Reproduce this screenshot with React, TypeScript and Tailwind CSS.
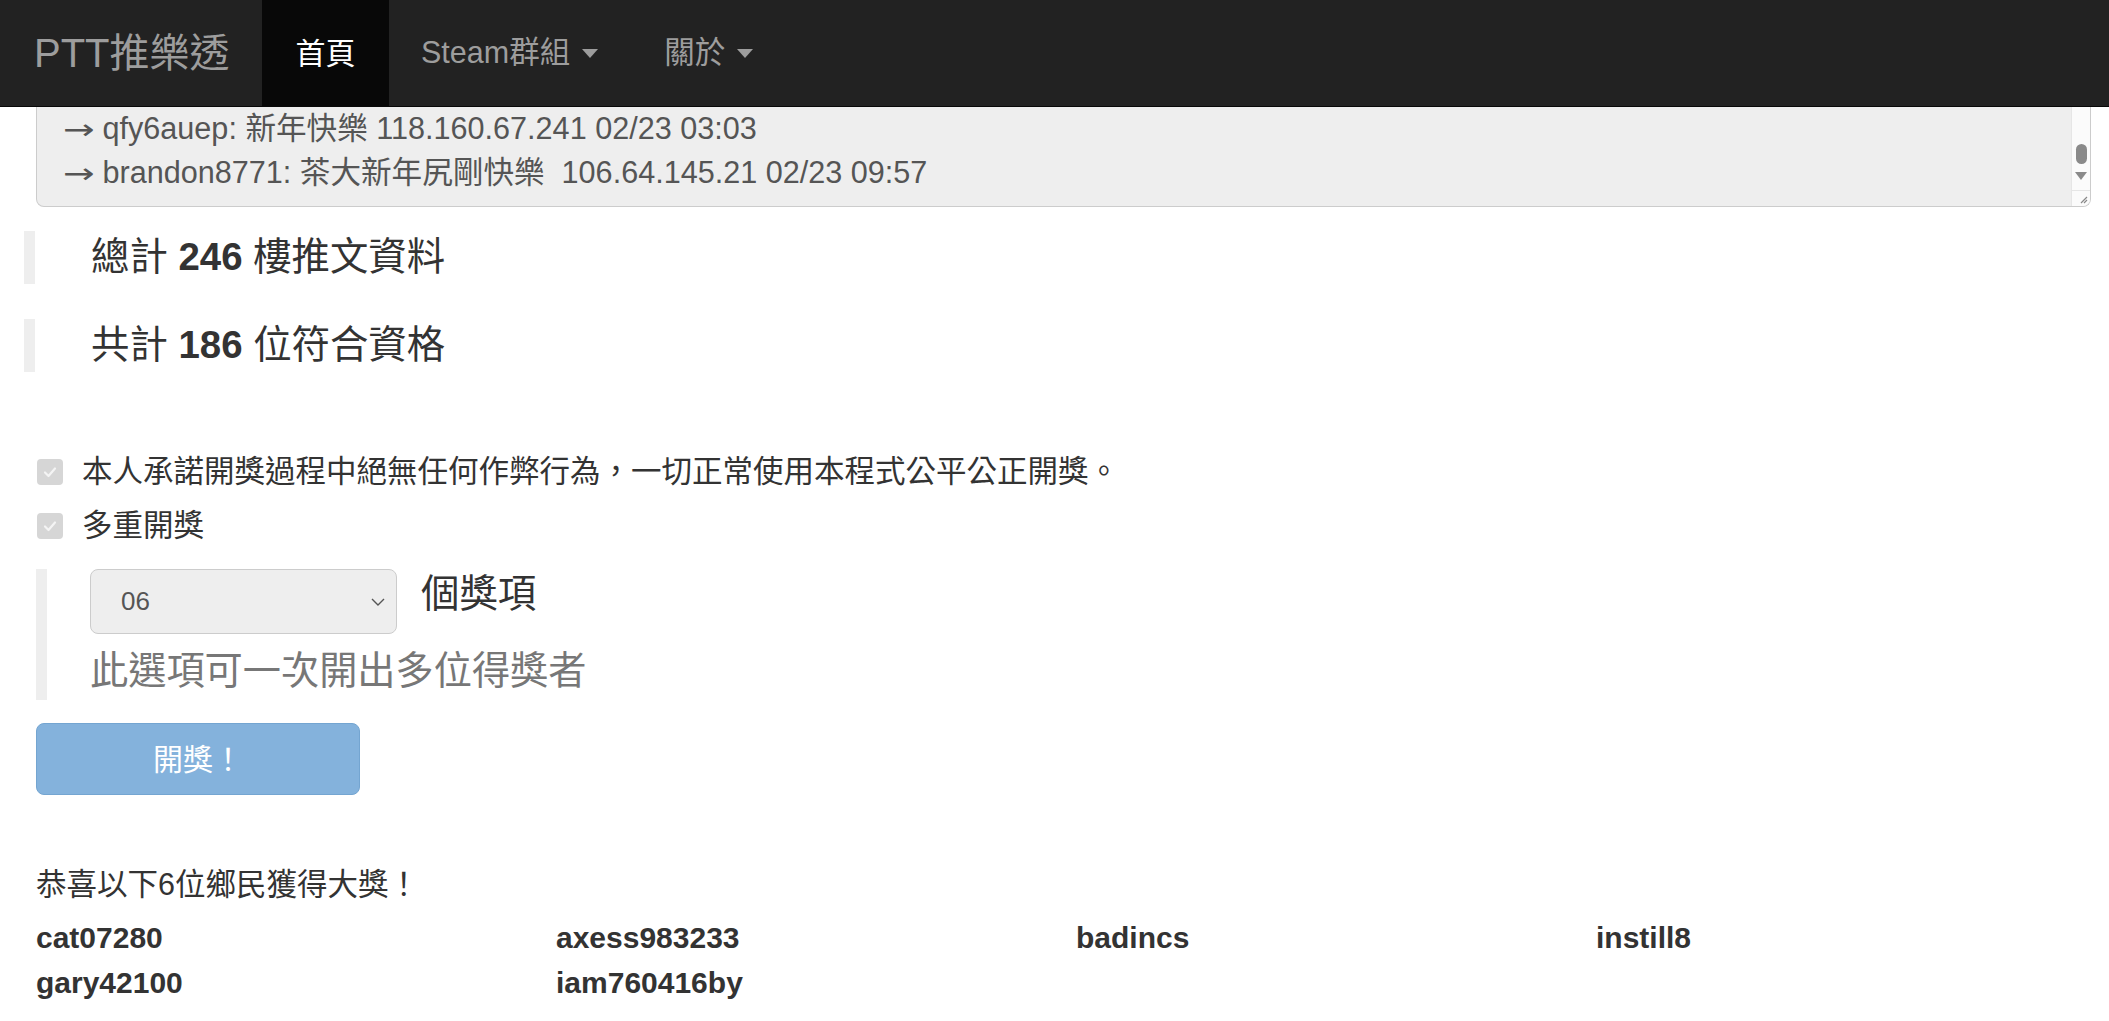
import React from 'react';

const winners = ['cat07280', 'axess983233', 'badincs', 'instill8', 'gary42100', 'iam760416by'];

const Caret: React.FC = () => (
  <span className="ml-[12px] inline-block h-0 w-0 border-x-[8px] border-t-[9px] border-x-transparent border-t-[#9d9d9d]" />
);

const CheckBox: React.FC = () => (
  <span className="flex h-[26px] w-[26px] shrink-0 items-center justify-center rounded-[4px] bg-[#d6d6d6]">
    <svg width="16" height="16" viewBox="0 0 16 16">
      <path d="M3 8.5 L6.5 12 L13 4.5" fill="none" stroke="#f4f4f4" strokeWidth="2.2" strokeLinecap="round" strokeLinejoin="round" />
    </svg>
  </span>
);

// push arrow, a bit wider than DejaVu's own glyph
const Arrow: React.FC = () => (
  <span className="inline-block w-[31px] font-['DejaVu_Sans',sans-serif] text-[28px]">
    <span className="inline-block origin-left scale-x-[1.35]">→</span>
  </span>
);

export default function App() {
  return (
    <div className="min-h-screen bg-white font-['Liberation_Sans','Noto_Sans_CJK_TC',sans-serif] text-[#333]">
      {/* Navbar */}
      <nav className="flex h-[107px] items-stretch border-b border-[#080808] bg-[#222] pl-[34px]">
        <div className="flex w-[228px] shrink-0 items-center text-[40px] text-[#9d9d9d]">PTT推樂透</div>
        <a className="flex w-[127px] items-center justify-center bg-[#080808] text-[30px] text-white">首頁</a>
        <a className="flex items-center px-[32px] text-[30.5px] text-[#9d9d9d]">
          Steam群組
          <Caret />
        </a>
        <a className="flex items-center px-[34px] text-[30.5px] text-[#9d9d9d]">
          關於
          <Caret />
        </a>
      </nav>

      <main className="pl-[36px] pr-[18px]">
        {/* Push list textarea (scrolled) */}
        <div className="flex h-[100px] overflow-hidden rounded-b-[8px] border-x border-b border-[#ccc] bg-[#eee]">
          <div className="flex-1 whitespace-pre pl-[26px] text-[30.6px] leading-[43px] text-[#555]">
            <div>
              <Arrow /> qfy6auep: 新年快樂 118.160.67.241 02/23 03:03
            </div>
            <div>
              <Arrow /> brandon8771: 茶大新年尻剛快樂  106.64.145.21 02/23 09:57
            </div>
          </div>
          <div className="flex w-[19px] flex-col items-center border-l border-[#e6e6e6] bg-[#fbfbfb]">
            <div className="mt-[37px] h-[20px] w-[11px] rounded-full bg-[#8a8a8a]" />
            <div className="mt-[8px] h-0 w-0 border-x-[6px] border-t-[8px] border-x-transparent border-t-[#8a8a8a]" />
            <div className="mt-auto mb-[2px] flex h-[14px] w-full items-end justify-end border-t border-[#e6e6e6] pr-[2px]">
              <svg width="10" height="10" viewBox="0 0 10 10">
                <path d="M9 3 L3 9 M9 6 L6 9" stroke="#888" strokeWidth="1.2" />
              </svg>
            </div>
          </div>
        </div>

        {/* Totals */}
        <div className="ml-[-12px] mt-[24px] flex h-[53px] items-center border-l-[11px] border-[#eee] pl-[56px] text-[38.4px] leading-none">
          總計&nbsp;<b>246</b>&nbsp;樓推文資料
        </div>
        <div className="ml-[-12px] mt-[35px] flex h-[53px] items-center border-l-[11px] border-[#eee] pl-[56px] text-[38.4px] leading-none">
          共計&nbsp;<b>186</b>&nbsp;位符合資格
        </div>

        {/* Checkboxes */}
        <label className="ml-px mt-[78px] flex h-[43px] items-center gap-[19px] text-[30.5px]">
          <CheckBox />
          本人承諾開獎過程中絕無任何作弊行為，一切正常使用本程式公平公正開獎。
        </label>
        <label className="ml-px mt-[11px] flex h-[43px] items-center gap-[19px] text-[30.5px]">
          <CheckBox />
          多重開獎
        </label>

        {/* Multi draw options */}
        <div className="mt-[22px] h-[131px] border-l-[11px] border-[#eee] pl-[43px]">
          <div className="flex items-start">
            <div className="flex h-[65px] w-[307px] items-center justify-between rounded-[8px] border border-[#ccc] bg-[#eee] pl-[30px] pr-[10px] text-[26px] text-[#555]">
              <span>06</span>
              <svg width="16" height="10" viewBox="0 0 16 10">
                <path d="M2 2 L8 8 L14 2" fill="none" stroke="#555" strokeWidth="1.4" />
              </svg>
            </div>
            <span className="ml-[24px] text-[38.4px] leading-[50px]">個獎項</span>
          </div>
          <div className="mt-[16px] text-[38.2px] leading-[42px] text-[#777]">此選項可一次開出多位得獎者</div>
        </div>

        {/* Draw button */}
        <button className="mt-[23px] flex h-[72px] w-[324px] items-center justify-center rounded-[8px] border border-[#74a5d1] bg-[#84b2dc] text-[30px] text-white">
          開獎！
        </button>

        {/* Result */}
        <div className="mt-[68px] text-[30.5px] leading-[43px]">恭喜以下6位鄉民獲得大獎！</div>
        <div className="mt-[9px] grid grid-cols-[repeat(4,520px)] text-[30px] font-bold leading-[45px]">
          {winners.map((w) => (
            <div key={w}>{w}</div>
          ))}
        </div>
      </main>
    </div>
  );
}
